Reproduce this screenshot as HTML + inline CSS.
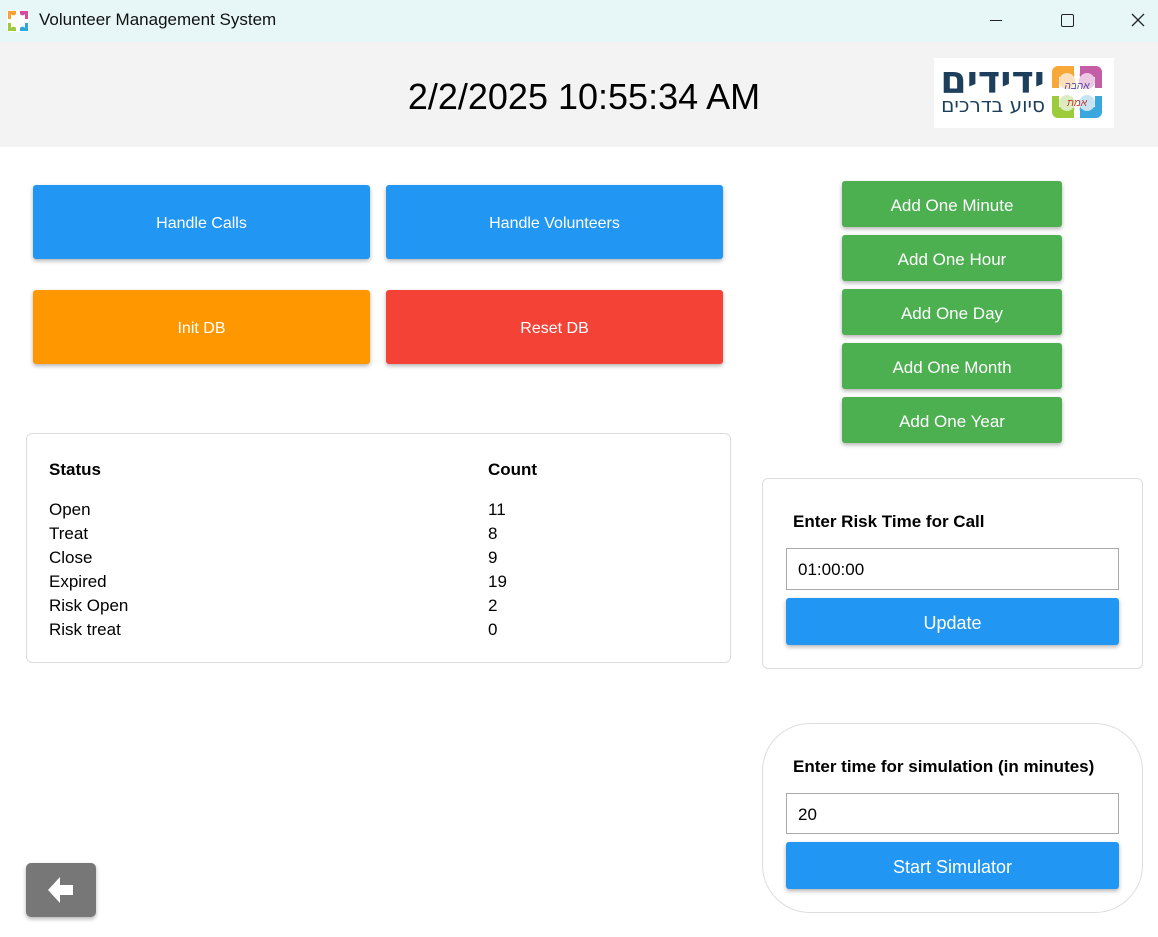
<!DOCTYPE html>
<html><head><meta charset="utf-8"><style>
*{box-sizing:border-box;margin:0;padding:0}
body{width:1158px;height:937px;position:relative;background:#fff;font-family:"Liberation Sans","Noto Sans CJK SC",sans-serif;overflow:hidden;color:#000}
.a{position:absolute}
.btn{position:absolute;color:#fff;font-size:16px;display:flex;align-items:center;justify-content:center;border-radius:3px;box-shadow:0 2px 4px rgba(0,0,0,.3);padding-top:3px}
.b{background:#2196f3}.g{background:#4caf50}
.t{position:absolute;font-size:17px;line-height:24px}
.in{position:absolute;border:1px solid #aaa;background:#fff;font-size:17px;padding-left:11px;padding-top:2px;display:flex;align-items:center}
</style></head><body>
<div class="a" style="left:0;top:0;width:1158px;height:42px;background:#e7f6f6"></div>
<svg class="a" style="left:7px;top:10px" width="22" height="22" viewBox="0 0 22 22">
<rect x="0" y="0" width="22" height="22" rx="3" fill="#fff"/>
<path d="M1 1h8v3a3 3 0 0 1-5 0v5H1z" fill="#f7a034"/>
<path d="M21 1h-8v3a3 3 0 0 0 5 0v5h3z" fill="#d54ba0"/>
<path d="M1 21h8v-3a3 3 0 0 0-5 0v-5H1z" fill="#9ccc3c"/>
<path d="M21 21h-8v-3a3 3 0 0 1 5 0v-5h3z" fill="#2ea7df"/>
</svg>
<div class="a" style="left:39px;top:10px;font-size:17px;color:#111">Volunteer Management System</div>
<div class="a" style="left:990px;top:20px;width:12px;height:1px;background:#222"></div>
<div class="a" style="left:1061px;top:14px;width:13px;height:13px;border:1.5px solid #222;border-radius:2px"></div>
<svg class="a" style="left:1131px;top:13px" width="14" height="14" viewBox="0 0 14 14"><path d="M1 1L13 13M13 1L1 13" stroke="#222" stroke-width="1.3"/></svg>
<div class="a" style="left:0;top:42px;width:1158px;height:105px;background:#f3f3f3"></div>
<div class="a" style="left:0;top:76px;width:1168px;text-align:center;font-size:36px">2/2/2025 10:55:34 AM</div>
<div class="a" style="left:934px;top:58px;width:180px;height:70px;background:#fff"></div>
<div class="a" style="left:930px;top:60px;width:115px;text-align:right;direction:rtl;font-size:38px;line-height:40px;font-weight:bold;color:#1d3f5c;font-family:'DejaVu Sans',sans-serif">ידידים</div>
<div class="a" style="left:930px;top:94px;width:115px;text-align:right;direction:rtl;font-size:20px;line-height:22px;color:#1d3f5c;font-family:'DejaVu Sans',sans-serif">סיוע בדרכים</div>
<svg class="a" style="left:1050px;top:64px" width="54" height="56" viewBox="0 0 54 56">
<path d="M2 8a6 6 0 0 1 6-6h16v7a5 5 0 0 1-10 4h-5v11H2z" fill="#f7a838"/>
<path d="M52 8a6 6 0 0 0-6-6H30v7a5 5 0 0 0 10 4h5v11h7z" fill="#c45ca6"/>
<path d="M2 48a6 6 0 0 0 6 6h16v-7a5 5 0 0 0-10-4H9V32H2z" fill="#9ccc3c"/>
<path d="M52 48a6 6 0 0 1-6 6H30v-7a5 5 0 0 1 10-4h5V32h7z" fill="#3aa7de"/>
<circle cx="17" cy="17" r="8" fill="#fce0c0"/><circle cx="37" cy="17" r="8" fill="#ecc8e4"/>
<circle cx="17" cy="39" r="8" fill="#dcecc0"/><circle cx="37" cy="39" r="8" fill="#c8e4f4"/>
<text x="27" y="25" font-size="10" fill="#5a4a9a" text-anchor="middle" font-style="italic">אהבה</text>
<text x="27" y="42" font-size="10" fill="#c0392b" text-anchor="middle" font-style="italic">אמת</text>
</svg>
<div class="btn b" style="left:33px;top:185px;width:337px;height:74px">Handle Calls</div>
<div class="btn b" style="left:386px;top:185px;width:337px;height:74px">Handle Volunteers</div>
<div class="btn" style="left:33px;top:290px;width:337px;height:74px;background:#ff9800">Init DB</div>
<div class="btn" style="left:386px;top:290px;width:337px;height:74px;background:#f44336">Reset DB</div>
<div class="btn g" style="left:842px;top:181px;width:220px;height:46px;font-size:17px">Add One Minute</div>
<div class="btn g" style="left:842px;top:235px;width:220px;height:46px;font-size:17px">Add One Hour</div>
<div class="btn g" style="left:842px;top:289px;width:220px;height:46px;font-size:17px">Add One Day</div>
<div class="btn g" style="left:842px;top:343px;width:220px;height:46px;font-size:17px">Add One Month</div>
<div class="btn g" style="left:842px;top:397px;width:220px;height:46px;font-size:17px">Add One Year</div>
<div class="a" style="left:26px;top:433px;width:705px;height:230px;border:1px solid #ddd;border-radius:6px"></div>
<div class="t" style="left:49px;top:458px;font-weight:bold">Status</div>
<div class="t" style="left:488px;top:458px;font-weight:bold">Count</div>
<div class="t" style="left:49px;top:498px">Open<br>Treat<br>Close<br>Expired<br>Risk Open<br>Risk treat</div>
<div class="t" style="left:488px;top:498px">11<br>8<br>9<br>19<br>2<br>0</div>
<div class="a" style="left:762px;top:478px;width:381px;height:191px;border:1px solid #ddd;border-radius:6px"></div>
<div class="t" style="left:793px;top:510px;font-weight:bold">Enter Risk Time for Call</div>
<div class="in" style="left:786px;top:548px;width:333px;height:42px">01:00:00</div>
<div class="btn b" style="left:786px;top:598px;width:333px;height:47px;font-size:18px">Update</div>
<div class="a" style="left:762px;top:723px;width:381px;height:190px;border:1px solid #ddd;border-radius:48px"></div>
<div class="t" style="left:793px;top:755px;font-weight:bold">Enter time for simulation (in minutes)</div>
<div class="in" style="left:786px;top:793px;width:333px;height:41px">20</div>
<div class="btn b" style="left:786px;top:842px;width:333px;height:47px;font-size:18px">Start Simulator</div>
<div class="btn" style="left:26px;top:863px;width:70px;height:54px;background:#777;border-radius:5px;padding-top:0">
<svg width="28" height="30" viewBox="0 0 28 30"><path d="M1 15L13 2v8h13v10H13v8z" fill="#fff"/></svg></div>
</body></html>
